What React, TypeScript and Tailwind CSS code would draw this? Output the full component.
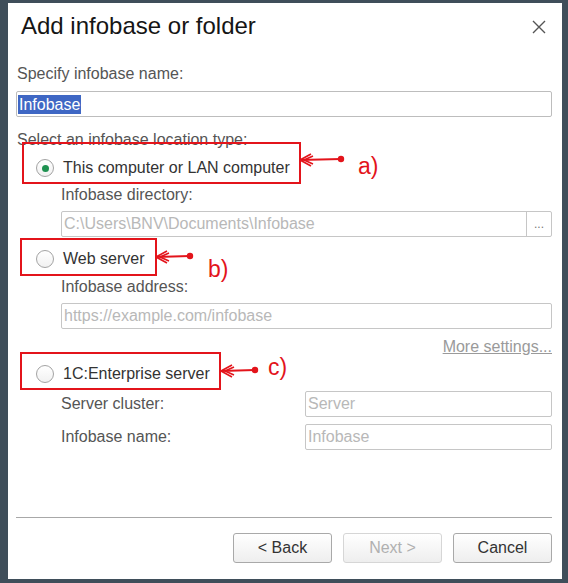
import React from 'react';

const font = { fontFamily: '"Liberation Sans", Arial, sans-serif' };

function Radio({ checked, label }: { checked?: boolean; label: string }) {
  return (
    <div className="flex items-center h-[20px] ml-[20px]">
      <span className="w-[18px] h-[18px] rounded-full border border-[#a3a3a3] bg-gradient-to-b from-white to-[#f1f1f1] flex items-center justify-center">
        {checked && <span className="w-[7px] h-[7px] rounded-full bg-[#1e9150]" />}
      </span>
      <span className="ml-[9px] text-[16px] leading-[20px] text-[#333]">{label}</span>
    </div>
  );
}

function Field({ placeholder, className = '' }: { placeholder: string; className?: string }) {
  return (
    <div
      className={`h-[26px] border border-[#c6c6c6] rounded-[2px] bg-white flex items-center px-[2px] text-[16px] text-[#b8b8b8] ${className}`}
    >
      {placeholder}
    </div>
  );
}

function Btn({ label, disabled }: { label: string; disabled?: boolean }) {
  return (
    <div
      className={`w-[99px] h-[30px] rounded-[3px] border flex items-center justify-center text-[16px] bg-gradient-to-b from-white to-[#eeeeee] ${
        disabled ? 'border-[#d6d6d6] text-[#b0b0b0]' : 'border-[#a9a9a9] text-[#333]'
      }`}
    >
      {label}
    </div>
  );
}

function Arrow({ x, y, len }: { x: number; y: number; len: number }) {
  return (
    <svg
      className="absolute"
      style={{ left: x - 2, top: y - 10 }}
      width={len + 8}
      height={20}
      viewBox={`0 0 ${len + 8} 20`}
    >
      <line x1={2} y1={10} x2={len + 2} y2={9} stroke="#e3141b" strokeWidth={2} />
      <path d="M2 10 L13 4 M2 10 L13 16 M6 10 L15 6 M6 10 L15 14" stroke="#e3141b" strokeWidth={1.6} fill="none" />
      <circle cx={len + 2} cy={9} r={3.2} fill="#e3141b" />
    </svg>
  );
}

export default function App() {
  return (
    <div className="relative w-[568px] h-[583px] bg-[#3f4e5a] pl-[8px] pr-[6px] pt-[3px] pb-[4px]" style={font}>
      <div className="w-full h-full bg-white flex flex-col pl-[8px] pr-[10px]">
        <div className="flex items-center justify-between mt-[9px] h-[28px]">
          <h1 className="text-[24px] leading-[28px] text-[#151515] ml-[5px]">Add infobase or folder</h1>
          <svg width="14" height="14" viewBox="0 0 14 14" className="mr-[6px] mt-[2px]">
            <path d="M1 1 L13 13 M13 1 L1 13" stroke="#555" strokeWidth="1.4" />
          </svg>
        </div>

        <div className="mt-[24px] text-[16px] leading-[20px] text-[#555] ml-[1px]">Specify infobase name:</div>
        <div className="mt-[7px] h-[26px] border border-[#bdbdbd] rounded-[2px] flex items-center px-[1px]">
          <span className="bg-[#3f67c4] text-white text-[16px] leading-[19px] px-[1px]">Infobase</span>
        </div>

        <div className="mt-[13px] text-[16px] leading-[20px] text-[#555] ml-[1px]">Select an infobase location type:</div>

        <div className="mt-[8px]">
          <Radio checked label="This computer or LAN computer" />
        </div>
        <div className="mt-[7px] ml-[45px] text-[16px] leading-[20px] text-[#555]">Infobase directory:</div>
        <div className="mt-[6px] ml-[45px] h-[26px] border border-[#c6c6c6] rounded-[2px] flex items-stretch">
          <div className="flex-1 flex items-center px-[2px] text-[16px] text-[#b8b8b8]">C:\Users\BNV\Documents\Infobase</div>
          <div className="w-[25px] border-l border-[#c6c6c6] flex items-center justify-center text-[12px] text-[#777]">...</div>
        </div>

        <div className="mt-[12px]">
          <Radio label="Web server" />
        </div>
        <div className="mt-[8px] ml-[45px] text-[16px] leading-[20px] text-[#555]">Infobase address:</div>
        <Field placeholder="https://example.com/infobase" className="mt-[6px] ml-[45px]" />

        <div className="mt-[8px] flex justify-end text-[16px] leading-[20px] text-[#9a9a9a] underline">More settings...</div>

        <div className="mt-[7px]">
          <Radio label="1C:Enterprise server" />
        </div>
        <div className="mt-[7px] flex items-center">
          <span className="ml-[45px] w-[244px] text-[16px] text-[#555]">Server cluster:</span>
          <Field placeholder="Server" className="flex-1" />
        </div>
        <div className="mt-[7px] flex items-center">
          <span className="ml-[45px] w-[244px] text-[16px] text-[#555]">Infobase name:</span>
          <Field placeholder="Infobase" className="flex-1" />
        </div>

        <div className="mt-[67px] h-px bg-[#a8a8a8]" />
        <div className="mt-[15px] flex justify-end gap-[11px]">
          <Btn label="< Back" />
          <Btn label="Next >" disabled />
          <Btn label="Cancel" />
        </div>
      </div>

      {/* annotations */}
      <div className="absolute left-[22px] top-[142px] w-[279px] h-[42px] border-2 border-[#e3141b]" />
      <Arrow x={300} y={160} len={41} />
      <span className="absolute left-[358px] top-[152px] text-[23px] leading-[28px] text-[#e3141b]">a)</span>

      <div className="absolute left-[20px] top-[238px] w-[137px] h-[38px] border-2 border-[#e3141b]" />
      <Arrow x={156} y={257} len={34} />
      <span className="absolute left-[208px] top-[255px] text-[23px] leading-[28px] text-[#e3141b]">b)</span>

      <div className="absolute left-[20px] top-[352px] w-[201px] h-[38px] border-2 border-[#e3141b]" />
      <Arrow x={221} y={371} len={34} />
      <span className="absolute left-[268px] top-[353px] text-[23px] leading-[28px] text-[#e3141b]">c)</span>
    </div>
  );
}
